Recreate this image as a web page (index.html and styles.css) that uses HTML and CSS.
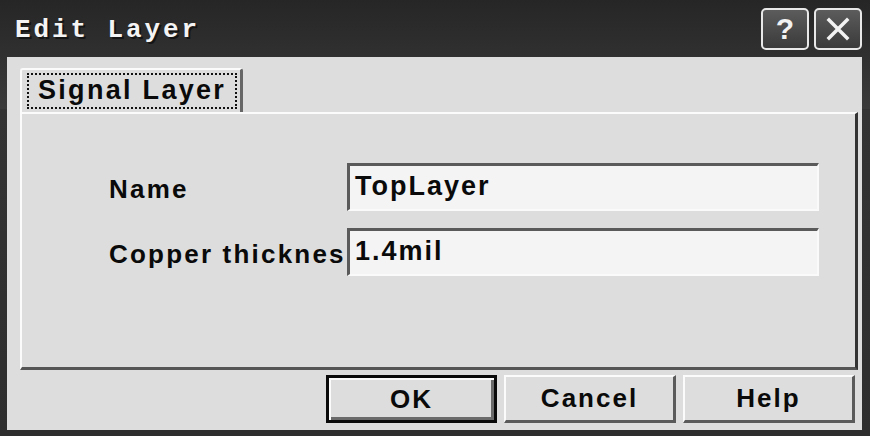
FILE: index.html
```html
<!DOCTYPE html>
<html>
<head>
<meta charset="utf-8">
<link rel="stylesheet" href="styles.css">
</head>
<body>
<div class="window">
  <div class="titlebar">
    <div class="title">Edit Layer</div>
    <div class="tbtns">
      <div class="tbtn">?</div>
      <div class="tbtn">
        <svg width="28" height="28" viewBox="0 0 28 28"><path d="M5 5L23 23M23 5L5 23" stroke="#f2f2f2" stroke-width="3.5" stroke-linecap="square"/></svg>
      </div>
    </div>
  </div>
  <div class="client">
    <div class="tabs">
      <div class="tab"><span class="focus">Signal Layer</span></div>
    </div>
    <div class="panel">
      <div class="form">
        <div class="label">Name</div>
        <div class="field">TopLayer</div>
        <div class="label">Copper thicknes</div>
        <div class="field">1.4mil</div>
      </div>
    </div>
    <div class="buttons">
      <div class="btn default">OK</div>
      <div class="btn">Cancel</div>
      <div class="btn">Help</div>
    </div>
  </div>
</div>
</body>
</html>
```

FILE: styles.css
```css
html, body {
  margin: 0;
  padding: 0;
  background: #2e2e2e;
}
.window {
  width: 870px;
  height: 436px;
  box-sizing: border-box;
  background: linear-gradient(#262626, #3a3a3a 25%, #474747 55px, #333 70px, #2e2e2e 100%);
  padding: 0 8px 6px 7px;
  display: flex;
  flex-direction: column;
}
.titlebar {
  height: 57px;
  display: flex;
  align-items: flex-start;
  justify-content: space-between;
}
.title {
  margin: 17px 0 0 8px;
  font-family: "Liberation Mono", "DejaVu Sans Mono", monospace;
  font-weight: bold;
  font-size: 26px;
  letter-spacing: 2.9px;
  line-height: 26px;
  color: #f4f4f4;
  text-shadow: 2px 2px 0 #151515;
}
.tbtns {
  display: flex;
  gap: 5px;
  margin: 8px 0 0 0;
}
.tbtn {
  width: 48px;
  height: 42px;
  box-sizing: border-box;
  border: 2px solid #e8e8e8;
  border-radius: 5px;
  background: linear-gradient(#5c5c5c, #3a3a3a);
  color: #f2f2f2;
  display: flex;
  align-items: center;
  justify-content: center;
  font-family: "Liberation Sans", Arial, sans-serif;
  font-weight: bold;
  font-size: 30px;
}
.client {
  flex: 1;
  background: #dddddd;
  padding: 11px 4px 7px 13px;
  display: flex;
  flex-direction: column;
}
.tabs {
  display: flex;
}
.tab {
  width: 223px;
  height: 44px;
  box-sizing: border-box;
  border-top: 2px solid #fbfbfb;
  border-left: 2px solid #fbfbfb;
  border-right: 3px solid #666;
  border-radius: 3px 3px 0 0;
  padding: 3px 3px 0 5px;
}
.focus {
  display: block;
  height: 36px;
  box-sizing: border-box;
  border: 2px dotted #111;
  padding-left: 9px;
  font-family: "Liberation Sans", Arial, sans-serif;
  font-weight: bold;
  font-size: 27px;
  letter-spacing: 2.3px;
  line-height: 31px;
  color: #0a0a0a;
}
.panel {
  height: 258px;
  box-sizing: border-box;
  border-top: 2px solid #fbfbfb;
  border-left: 2px solid #fbfbfb;
  border-right: 3px solid #333;
  border-bottom: 3px solid #555;
  padding: 49px 0 0 87px;
}
.form {
  display: grid;
  grid-template-columns: 238px 472px;
  row-gap: 17px;
  align-items: center;
}
.label {
  font-family: "Liberation Sans", Arial, sans-serif;
  font-weight: bold;
  font-size: 26px;
  letter-spacing: 2.2px;
  color: #0a0a0a;
  white-space: nowrap;
  padding-top: 4px;
}
.field {
  height: 48px;
  box-sizing: border-box;
  background: #f4f4f4;
  border-top: 3px solid #5a5a5a;
  border-left: 3px solid #5a5a5a;
  border-right: 2px solid #fafafa;
  border-bottom: 2px solid #fafafa;
  padding: 2px 0 0 5px;
  font-family: "Liberation Sans", Arial, sans-serif;
  font-weight: bold;
  font-size: 27px;
  letter-spacing: 2px;
  line-height: 36px;
  color: #0a0a0a;
}
.buttons {
  display: flex;
  justify-content: flex-end;
  gap: 7px;
  margin-top: 5px;
  padding-right: 3px;
}
.btn {
  width: 172px;
  height: 48px;
  box-sizing: border-box;
  border-top: 2px solid #fbfbfb;
  border-left: 2px solid #fbfbfb;
  border-right: 3px solid #5a5a5a;
  border-bottom: 3px solid #5a5a5a;
  display: flex;
  align-items: center;
  justify-content: center;
  font-family: "Liberation Sans", Arial, sans-serif;
  font-weight: bold;
  font-size: 26px;
  letter-spacing: 2px;
  color: #0a0a0a;
}
.btn.default {
  width: 171px;
  border: 3px solid #0a0a0a;
  box-shadow: inset 2px 2px 0 #fbfbfb, inset -3px -3px 0 #6a6a6a;
}
```
